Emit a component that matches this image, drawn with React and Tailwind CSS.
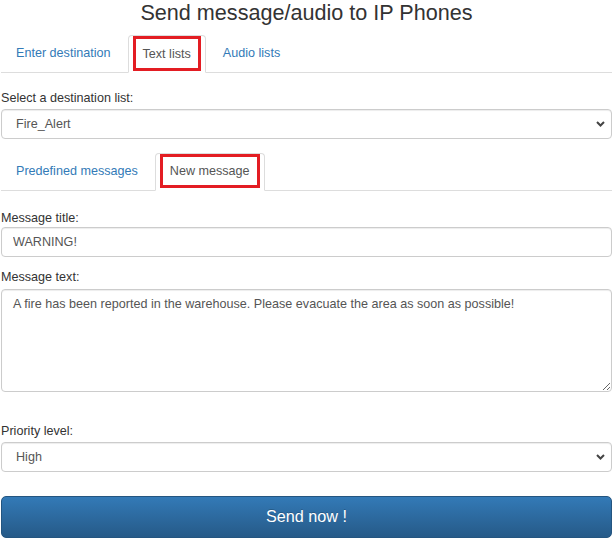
import { useState } from "react";

const Tab = ({ label, active, boxH }) => {
    if (active) {
        return (
            <li className="mr-[2px] -mb-px">
                <span className="flex items-start h-[38px] px-[4px] bg-white border border-[#ddd] border-b-transparent rounded-t-[4px] text-[#555]">
                    <span className={`flex items-center ${boxH} px-[7px] border-[3px] border-[#e31d23]`}>{label}</span>
                </span>
            </li>
        );
    }
    return (
        <li className="mr-[2px] -mb-px">
            <a href="#" className="block h-[38px] pt-[8px] px-[14px] border border-transparent rounded-t-[4px] text-[#337ab7] leading-[18px]">
                {label}
            </a>
        </li>
    );
};

// dropdown box that cycles through its options on click
const Select = ({ options, value }) => {
    const [current, setCurrent] = useState(value);
    const next = () => {
        const i = options.indexOf(current);
        setCurrent(options[(i + 1) % options.length]);
    };
    return (
        <button
            type="button"
            onClick={next}
            className="flex items-center justify-between w-full h-[30px] pl-[14px] pr-[6px] bg-white border border-[#ccc] rounded-[4px] text-[#555] text-left shadow-[inset_0_1px_1px_rgba(0,0,0,0.075)] outline-none"
        >
            <span>{current}</span>
            <svg width="9" height="6" viewBox="0 0 9 6">
                <path d="M1 1l3.5 3.5L8 1" fill="none" stroke="#444" strokeWidth="2" />
            </svg>
        </button>
    );
};

const App = () => {
    const [title, setTitle] = useState("WARNING!");
    const [text, setText] = useState(
        "A fire has been reported in the warehouse. Please evacuate the area as soon as possible!"
    );

    return (
        <div className="ml-px mr-[2px] text-[12.6px] leading-[18px] text-[#333] font-['Liberation_Sans',Arial,sans-serif]">
            <h1 className="h-[35px] text-center text-[21.6px] leading-[26px] text-[#333]">
                Send message/audio to IP Phones
            </h1>

            {/* destination tabs */}
            <ul className="flex border-b border-[#ddd]">
                <Tab label="Enter destination" />
                <Tab label="Text lists" active boxH="h-[35px]" />
                <Tab label="Audio lists" />
            </ul>

            <label className="block mt-[16px] h-[18px] mb-[2px]">Select a destination list:</label>
            <Select options={["Fire_Alert", "Evacuation"]} value="Fire_Alert" />

            {/* message tabs */}
            <ul className="flex mt-[14px] border-b border-[#ddd]">
                <Tab label="Predefined messages" />
                <Tab label="New message" active boxH="h-[34px]" />
            </ul>

            <label className="block mt-[18px] h-[18px]">Message title:</label>
            <input
                type="text"
                value={title}
                onChange={(e) => setTitle(e.target.value)}
                className="block w-full h-[30px] px-[11px] bg-white border border-[#ccc] rounded-[4px] text-[#555] shadow-[inset_0_1px_1px_rgba(0,0,0,0.075)] outline-none"
            />

            <label className="block mt-[11px] h-[18px] mb-[3px]">Message text:</label>
            <textarea
                value={text}
                onChange={(e) => setText(e.target.value)}
                className="block w-full h-[103px] px-[11px] pt-[5px] bg-white border border-[#ccc] rounded-[4px] text-[#555] shadow-[inset_0_1px_1px_rgba(0,0,0,0.075)] outline-none"
            />

            <label className="block mt-[30px] h-[18px] mb-[2px]">Priority level:</label>
            <Select options={["Low", "Normal", "High"]} value="High" />

            <button
                type="button"
                className="block w-full h-[42px] mt-[24px] pb-[2px] rounded-[5px] border border-[#245580] bg-linear-to-b from-[#337ab7] to-[#265a88] text-white text-[16.2px] [text-shadow:0_-1px_0_rgba(0,0,0,0.2)]"
            >
                Send now !
            </button>
        </div>
    );
};

export default App;
